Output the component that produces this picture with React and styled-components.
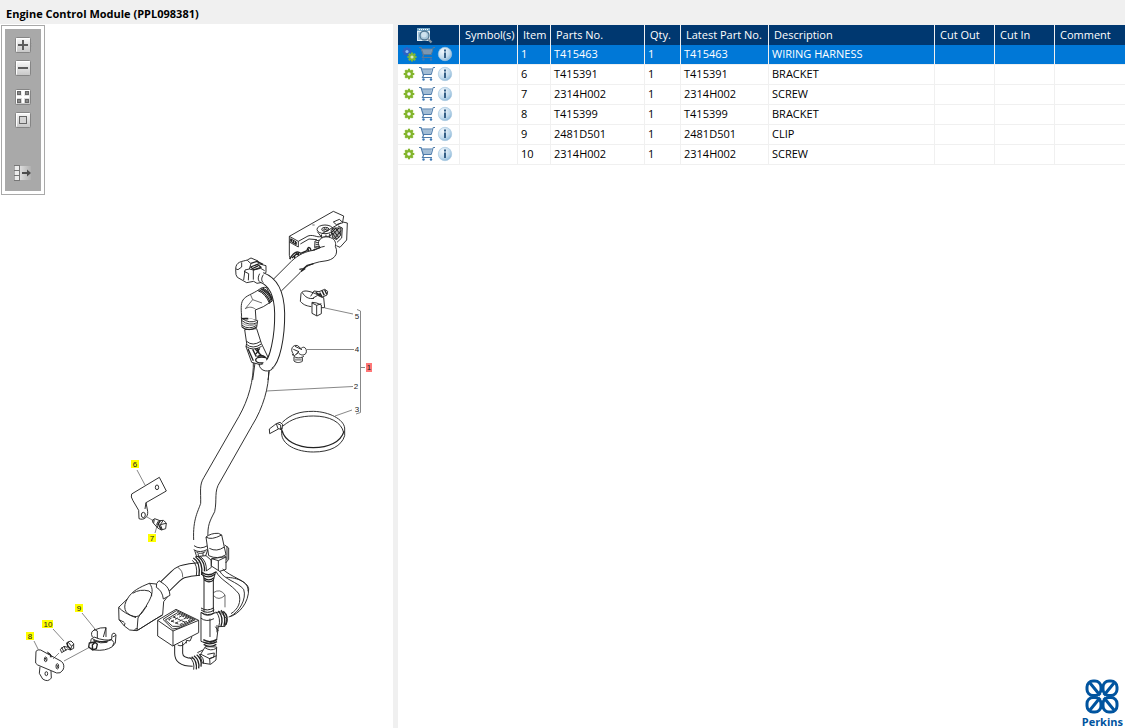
import React, { useState } from "react";
import styled, { createGlobalStyle } from "styled-components";

const GlobalStyle = createGlobalStyle`
  * { box-sizing: border-box; }
  body {
    margin: 0;
    background: #fff;
    color: #000;
    font: 11px/16px "Open Sans", "Noto Sans", sans-serif;
  }
`;

const Page = styled.div`
  min-height: 100vh;
  display: flex;
  flex-direction: column;
`;

const TitleBar = styled.header`
  height: 24px;
  padding: 6px 6px 2px;
  background: #f0f0f0;
`;

const Title = styled.h1`
  margin: 0;
  font-size: 11px;
  line-height: 16px;
  font-weight: 700;
`;

const Workspace = styled.main`
  flex: 1;
  display: grid;
  grid-template-columns: minmax(0, 393fr) 5px minmax(0, 727fr);
`;

const Illustration = styled.section`
  position: relative;
  min-width: 0;
`;

const Drawing = styled.svg`
  display: block;
  width: 100%;
  height: auto;
`;

const Callout = styled.text`
  font: 8px/8px "Liberation Sans", sans-serif;
  fill: #222;
  text-anchor: middle;
`;

const Splitter = styled.div`
  background: #f0f0f0;
`;

const Toolbar = styled.div`
  position: absolute;
  top: 1px;
  left: 1px;
  padding: 3px;
  border: 1px solid #a9a9a9;
  background: #fff;
`;

const ToolbarBody = styled.div`
  display: flex;
  flex-direction: column;
  align-items: center;
  gap: 11px;
  padding: 7px 9px 9px;
  background: #a9a9a9;
`;

const ToolGroup = styled.div`
  display: flex;
  flex-direction: column;
  gap: 5px;
  ${(p) => p.$last && "padding-top: 24px;"}
`;

const IconButton = styled.button`
  display: block;
  width: 18px;
  height: 18px;
  padding: 0;
  border: 0;
  background: none;
  cursor: pointer;
  svg { display: block; width: 18px; height: 18px; }
`;

const PartsPanel = styled.section`
  min-width: 0;
  padding-top: 1px;
  background: linear-gradient(#f0f0f0 1px, #fff 1px);
  display: flex;
  flex-direction: column;
  justify-content: space-between;
`;

const PartsTable = styled.table`
  width: 100%;
  table-layout: fixed;
  border-collapse: separate;
  border-spacing: 0;
`;

const Column = styled.col`
  width: ${(p) => (p.$width ? p.$width + "px" : "auto")};
`;

const HeadCell = styled.th`
  height: 20px;
  padding: 0 0 0 5px;
  border-right: 1px solid #f0f0f0;
  background: #003870;
  color: #fff;
  font-weight: 400;
  text-align: left;
  white-space: nowrap;
  &:last-child { border-right: 0; }
`;

const HeadIcon = styled.span`
  display: flex;
  justify-content: center;
  padding-right: 14px;
  svg { width: 18px; height: 18px; }
`;

const Row = styled.tr`
  background: ${(p) => (p.$selected ? "#0078d7" : "#fff")};
  color: ${(p) => (p.$selected ? "#fff" : "#000")};
  cursor: default;
`;

const Cell = styled.td`
  height: 20px;
  padding: 0 0 0 3px;
  border-right: 1px solid #f0f0f0;
  border-bottom: 1px solid #f0f0f0;
  line-height: 18px;
  vertical-align: top;
  white-space: nowrap;
  overflow: hidden;
  &:last-child { border-right: 0; }
`;

const RowActions = styled.div`
  display: flex;
  margin-left: -1px;
`;

const Brand = styled.footer`
  align-self: flex-end;
  display: flex;
  flex-direction: column;
  align-items: center;
  padding-right: 2px;
  color: #00549f;
  font: 700 11px/13px "Open Sans", sans-serif;
  svg { width: 34px; height: 36px; }
`;

/* ---------- toolbar icons ---------- */

function ToolFace({ children, tab }) {
  return (
    <svg viewBox="0 0 18 18" aria-hidden="true">
      <defs>
        <linearGradient id="face" x1="0" y1="0" x2="0" y2="1">
          <stop offset="0" stopColor="#fafafa" />
          <stop offset="1" stopColor="#c6c6c6" />
        </linearGradient>
      </defs>
      {tab === "right" && <path d="M16 6 18 9 16 11.500z" fill="#eee" stroke="#7c7c7c" strokeWidth=".6" />}
      {tab === "left" && <path d="M2 6 0 9 2 11.500z" fill="#eee" stroke="#7c7c7c" strokeWidth=".6" />}
      <rect x="1.500" y="1.500" width="15" height="15" rx="1" fill="url(#face)" stroke="#858585" />
      <path d="M2.500 15.500V2.500H15.500" fill="none" stroke="#fff" />
      {children}
    </svg>
  );
}

const ZoomInIcon = () => (
  <ToolFace tab="right"><path d="M4 9H14M9 4V14" stroke="#5c5c5c" strokeWidth="2" /></ToolFace>
);
const ZoomOutIcon = () => (
  <ToolFace tab="left"><path d="M4 9H14" stroke="#5c5c5c" strokeWidth="2" /></ToolFace>
);
const TilesIcon = () => (
  <ToolFace>
    <g fill="#8a8a8a" stroke="#666">
      <rect x="3.500" y="3.500" width="3" height="3" /><rect x="11.500" y="3.500" width="3" height="3" />
      <rect x="3.500" y="11.500" width="3" height="3" /><rect x="11.500" y="11.500" width="3" height="3" />
    </g>
    <path d="M9 3V15M3 9H15" stroke="#fff" strokeWidth="2" />
  </ToolFace>
);
const FitIcon = () => (
  <ToolFace><rect x="5.500" y="5.500" width="7" height="7" fill="#d5d5d5" stroke="#666" /></ToolFace>
);
const DetachIcon = () => (
  <svg viewBox="0 0 18 18" aria-hidden="true">
    <defs>
      <linearGradient id="fade"><stop stopColor="#ddd" /><stop offset="1" stopColor="#b0b0b0" /></linearGradient>
    </defs>
    <path d="M6 2H17V16H6z" fill="url(#fade)" />
    <path d="M1 2H5V6H1zM1 7H5V11H1zM1 12H5V16H1z" fill="#ececec" />
    <path d="M0 1.500H5M0 6.500H5M0 11.500H5M0 16.500H5" stroke="#777" />
    <path d="M5.500 1V17" stroke="#777" />
    <path d="M8 9H14" stroke="#4c4c4c" strokeWidth="2" />
    <path d="M13 5.500 17 9 13 12.500z" fill="#4c4c4c" />
  </svg>
);

/* ---------- table icons ---------- */

const PreviewIcon = () => (
  <svg viewBox="0 0 18 18" aria-hidden="true">
    <rect x="2" y="2" width="13" height="13" fill="#e6f1f8" />
    <path d="M2 2H15V5H2z" fill="#78a9c9" />
    <path d="M4 3.500H13" stroke="#fff" strokeDasharray="1 1" />
    <path d="M3 7H6M3 9H5M3 11H5M3 13H6" stroke="#5c94bb" />
    <circle cx="9.500" cy="9.500" r="4.500" fill="#a9c7da" stroke="#507691" strokeWidth="1.300" />
    <circle cx="9" cy="8.800" r="2.700" fill="#cfe2ee" />
    <path d="M12.500 12.500 16.500 16.500" stroke="#8799a8" strokeWidth="2.300" />
  </svg>
);

const gearTeeth = [0, 45, 90, 135];

const GearShape = ({ x, y, r, color, hole = "#fff" }) => (
  <g transform={`translate(${x} ${y})`}>
    {gearTeeth.map((a) => (
      <path key={a} d={`M0 ${-r}V${r}`} stroke={color} strokeWidth={r * 0.42} transform={`rotate(${a})`} />
    ))}
    <circle r={r * 0.76} fill={color} />
    <circle r={r * 0.34} fill={hole} />
  </g>
);
const GearIcon = () => (
  <svg viewBox="0 0 18 18" aria-hidden="true"><GearShape x={9} y={9} r={5.300} color="#83b52c" /></svg>
);
const GearsIcon = () => (
  <svg viewBox="0 0 18 18" aria-hidden="true">
    <GearShape x={7} y={6.500} r={4.600} color="#2f62c4" hole="#8fc0f5" />
    <GearShape x={12} y={12} r={4.600} color="#7eb637" hole="#d6ecc0" />
  </svg>
);
const CartIcon = ({ muted }) => (
  <svg viewBox="0 0 18 18" aria-hidden="true">
    <path d="M3 4H15L13.500 9.500H5z" fill={muted ? "#91afc9" : "#e4eef6"} />
    <g fill="none" stroke={muted ? "#5d7894" : "#4f7dac"}>
      <path d="M1 2.500H3L5.500 10.500 4.500 12.500H14" strokeWidth="1.200" />
      <path d="M3.500 4H14.500M17 2.500H15.200L13.300 9.500H5" />
      <path d="M4 6H14M4.500 8H13.500M6 4V9.500M8 4V9.500M10 4V9.500M12 4V9.500" strokeWidth=".5" />
    </g>
    <circle cx="5.500" cy="14.500" r="1.200" fill="#3c78b5" /><circle cx="13" cy="14.500" r="1.200" fill="#3c78b5" />
  </svg>
);
const InfoIcon = () => (
  <svg viewBox="0 0 18 18" aria-hidden="true">
    <defs>
      <radialGradient id="glass" cx=".35" cy=".3" r=".8">
        <stop stopColor="#f0f7fc" /><stop offset=".6" stopColor="#c3dcee" /><stop offset="1" stopColor="#80afd2" />
      </radialGradient>
    </defs>
    <circle cx="9" cy="9" r="6.700" fill="url(#glass)" stroke="#a6c7df" strokeWidth=".7" />
    <path d="M8 7.500H10V13H8zM8 4.500H10V6.500H8z" fill="#345f86" />
  </svg>
);

const KnotLogo = () => (
  <svg viewBox="0 0 34 36" aria-hidden="true">
    <g fill="none" stroke="#00549f" strokeWidth="3">
      <rect x="2" y="2" width="14" height="14.500" rx="6" />
      <rect x="18" y="2" width="14" height="14.500" rx="6" />
      <rect x="2" y="18.500" width="14" height="14.500" rx="6" />
      <rect x="18" y="18.500" width="14" height="14.500" rx="6" />
      <path d="M5 4 14 15M29 4 20 15M5 31 14 20M29 31 20 20M13 14 21 21M21 14 13 21" />
    </g>
    <path d="M17 14.500 20 17.500 17 20.500 14 17.500z" fill="#fff" />
  </svg>
);

/* ---------- exploded view ---------- */

const callouts = [
  { n: 6, x: 135, y: 464 }, { n: 7, x: 152, y: 538 }, { n: 8, x: 30, y: 636 },
  { n: 9, x: 79, y: 608 }, { n: 10, x: 48, y: 624 },
];
const plainCallouts = [
  { n: 5, x: 357, y: 316 }, { n: 4, x: 357, y: 349 }, { n: 2, x: 356, y: 386 }, { n: 3, x: 357, y: 409 },
];

const section = (x, y) => `translate(${x} ${y}) scale(.33333)`;

/* A hose: a dark line with a white core drawn along the same centre line. */
const Hose = ({ d, width }) => (
  <>
    <path d={d} strokeWidth={width} />
    <path d={d} stroke="#fff" strokeWidth={width - 6} strokeLinecap="square" />
  </>
);

function Leaders() {
  return (
    <g stroke="#888" strokeWidth="1" fill="none">
      <path d="M325 308 353 314M307 349.500H354M266 391 353 386.500M335 416 352 410M357 309.500 360.500 311V412.500L356 414M360.500 367.500H365" />
      <path d="M137 470 145 485M155 533 157 526M34 641 38 649M82 613 95 629M53 629 64 641" />
      <path d="M147 517 154 521M53 659 59 653M64 661 90 647" />
    </g>
  );
}

function UpperHarness() {
  return (
    <g transform={section(220, 200)}>
      {/* control unit connector */}
      <path d="M208 109 340 34 371 48 368 66 382 69 380 120 360 142 349 137" />
      <path d="M208 109V166L211 178M208 109 235 124V141L208 126M212 116 229 126V134L212 124z" />
      <path d="M214 117V125M220 120V130M226 124V133" strokeWidth="4" />
      <path d="M235 124 264 108C282 101 298 119 306 105M241 132 267 117 291 119M306 101 362 69" />
      <path d="M340 66 358 58 369 68 349 74zM354 78 367 84 365 114 351 127" />
      <ellipse cx="315" cy="88" rx="24" ry="13" />
      <ellipse cx="316" cy="88" rx="11" ry="6" />
      <path d="M308 88H324M312 84 320 92M320 84 312 92M277 75H284" strokeWidth="2" />
      <path d="M292 95 305 112 331 108 339 93M304 103V122M318 104V118M329 101V113" />
      <path d="M333 91 342 84H363L362 106 350 119 338 113z" fill="#aaa" />
      <path d="M337 87 357 114M346 84 362 104M335 97 350 117M357 84 337 105M363 92 344 115M348 84 335 97" strokeWidth="3" />
      <path d="M285 123 301 120 297 145 284 143zM287 128H299M287 134H298M286 140H297" />
      <path d="M209 177C221 157 231 151 242 160L261 152C263 137 273 141 273 155L286 147M216 174 230 161 244 170M224 167V181M235 156V172M250 156 255 167M263 145 269 158" strokeWidth="4" />
      {/* main loom */}
      <path d="M159 239 214 184C236 163 258 154 281 151L301 143C285 125 305 107 325 111 345 115 349 128 346 139 358 164 340 180 315 183 292 185 270 193 253 204L240 218 184 273" fill="#fff" />
      <path d="M281 151C290 146 302 141 314 139" />
      <path d="M238 208 250 206 262 196 281 191M243 214 256 205" strokeWidth="4" />
      {/* rear sensor plug */}
      <path d="M47 208C47 184 66 185 82 180L93 174 114 183 115 191 138 197V218L128 222 122 230V248L111 250 101 244 80 248 52 232 48 224z" />
      <path d="M65 187V201L54 209 48 207M82 181 93 191 88 207 75 210 71 240M88 207 100 210V239M72 214 86 221 85 241M101 210 122 205 134 212" />
      <path d="M92 201 112 193 123 202 102 209zM93 190 111 184 129 193M100 204 114 198" strokeWidth="4" />
      {/* lower boot */}
      <path d="M74 389 80 430 78 440 95 487 121 494 150 484 124 430 110 386z" fill="#fff" />
      <path d="M80 424Q98 440 122 424M78 432Q98 450 124 432M78 439Q99 455 125 439" />
      <path d="M84 446 100 482M98 448 109 470M106 447 125 468M119 445 108 462M112 444 118 462" strokeWidth="4" />
      <ellipse cx="125" cy="480" rx="18" ry="9" strokeWidth="4" />
      <path d="M112 470Q126 462 136 472" strokeWidth="4" />
      <path d="M105 489 98 540M148 512 144 540" />
      {/* elbow */}
      <path d="M118 268C97 283 78 286 69 300 61 311 64 334 65 352L108 360 106 330 130 320 157 303 140 263C132 260 122 264 118 268z" fill="#fff" />
      <path d="M92 285 98 299 126 309M98 299 76 326C88 319 98 321 107 328" strokeWidth="2" />
      <path d="M114 272Q137 281 149 311M121 267Q145 277 154 305M128 264Q150 274 157 297" strokeWidth="3" />
      <path d="M118 270Q141 280 151 308" strokeWidth="4" />
      <path d="M124 266Q147 275 156 301" strokeWidth="4" />
      {/* clamp */}
      <path d="M64 349 66 382Q86 396 110 382L113 361" fill="#fff" />
      <path d="M65 354Q87 373 112 361M66 362Q87 379 112 368M66 376Q87 391 110 376M67 382Q87 396 110 381" />
      <path d="M66 369Q87 384 111 371" stroke="#888" />
      <path d="M66 356H85" strokeWidth="5" />
      {/* looped tube in front of the elbow */}
      <Hose d="M124 232C164 246 178 285 179 340 180 415 163 483 147 493" width={33} />
      <path d="M117 492C119 516 150 519 161 503" />
      <path d="M119 221C114 230 113 238 118 245M130 224C124 234 123 242 130 248" />
      {/* strap with fixing */}
      <path d="M243 281C249 267 270 274 286 281L311 293 314 323 304 323M243 281 241 304C252 317 264 318 274 320M247 278C255 291 266 298 282 295M276 307 276 340 291 348 304 341V315L290 309zM276 309 290 316 304 311M290 316V347" />
      <path d="M272 289 282 273 297 275 314 268 323 274 321 285 306 292 293 286 278 295" />
      <path d="M287 277 301 286M299 278 306 290M306 272 313 286M314 269 320 283" strokeWidth="4" />
      {/* small clip */}
      <path d="M220 461C209 450 218 432 233 437L243 446C252 435 263 447 258 460 250 469 239 464 235 458L223 467 219 462M220 448 237 455 229 462M225 439 246 449M217 461C219 474 240 478 252 468M222 471V483C231 490 240 488 247 484V472" />
      <path d="M225 479H245" strokeWidth="6" stroke="#999" />
    </g>
  );
}

function LoomAndTie() {
  return (
    <g transform={section(180, 360)}>
      <path d="M220 0C222 62 205 119 177 169L72 352C57 375 63 395 62 430 55 453 38 477 41 540" />
      <path d="M266 34C267 79 250 143 216 197L120 366C101 394 112 417 104 455 89 484 82 496 84 535" />
      <path d="M307 187C333 162 360 154 400 154 448 155 491 178 494 204V227C485 258 451 276 400 276 350 276 305 254 305 220V203M309 198C334 177 361 168 400 168 449 168 484 186 491 218" />
      <path d="M306 211C313 241 350 263 400 263 446 263 482 246 492 214" strokeWidth="4" />
      <path d="M289 191 268 207 269 221 295 207M289 191 300 187 308 193 306 208 294 206zM292 191 302 195V210" />
    </g>
  );
}

function LowerHarness() {
  return (
    <g transform={section(110, 525)}>
      {/* upper junction */}
      <path d="M252 62Q270 75 293 62M251 74Q270 86 293 73M254 76 260 95 286 95 293 75M259 81Q271 90 286 80M264 86 266 96M279 84V94" />
      <path d="M256 95 288 92 303 105 304 127 286 140 262 150" fill="#fff" />
      <path d="M305 101 304 123 329 139 348 133V95z" fill="#fff" />
      <path d="M344 60 356 69V103L347 114M351 64V105M325 107V136M305 101 325 107 348 96" />
      <path d="M288 36Q303 24 325 25L335 30 348 89Q323 105 296 92z" fill="#fff" />
      <path d="M288 36Q303 47 335 30M298 70Q320 82 343 66" />
      {/* cables */}
      <path d="M318 139C329 164 364 177 387 207 394 231 385 252 363 266M329 138C341 163 383 171 401 193 411 222 387 262 361 274M338 132C359 155 414 168 416 191 417 233 387 269 356 276M349 157C381 158 417 170 414 199" />
      <path d="M310 203Q331 189 345 210V247M311 212Q326 229 345 211" strokeWidth="2" />
      {/* side branch */}
      <Hose d="M158 191 196 154C212 139 222 138 240 135L268 132" width={41} />
      <path d="M203 127Q219 136 218 157" strokeWidth="2" />
      <path d="M250 99Q272 112 267 152M257 96Q280 112 275 150M264 94Q288 112 283 145" strokeWidth="4" />
      <path d="M247 106Q264 120 259 153M270 94Q291 108 289 138" />
      <path d="M52 222C66 197 91 186 118 175L138 177 171 217 161 230 158 269 81 317 59 315 43 303 27 284 26 247z" fill="#fff" />
      <path d="M139 187Q157 197 160 222L180 211Q178 188 163 178L147 167Q137 174 139 187z" fill="#fff" />
      <path d="M118 175C131 190 128 208 116 230 106 251 91 264 84 279L81 317M52 222C38 244 42 267 71 274 93 280 101 252 111 243M68 205Q90 191 117 198 128 204 125 214M26 247Q42 265 78 278M27 284 43 292M43 303 45 294" />
      <path d="M71 318Q78 306 86 314L130 286 158 270" />
      {/* vertical stem */}
      <Hose d="M296 162V262" width={31} />
      <path d="M276 139 283 164Q297 175 310 166L317 140" fill="#fff" />
      <path d="M276 142Q295 157 317 141M277 149Q295 163 315 148M281 158Q296 171 312 158" strokeWidth="4" />
      <path d="M282 165Q297 177 311 165" />
      {/* lower junction */}
      <path d="M273 262Q291 279 314 264L331 260 351 282 345 304 325 305 320 345Q296 361 273 349z" fill="#fff" />
      <path d="M272 279Q289 293 312 281M300 281V336M321 300V322M316 305 325 318" />
      <path d="M273 249Q292 261 312 248M273 255Q292 269 313 255M273 262Q292 275 314 263" strokeWidth="3" />
      <path d="M325 258Q342 277 333 304M333 256Q350 274 342 303M340 259Q358 274 348 299" strokeWidth="4" />
      <path d="M318 260Q334 280 326 306" />
      {/* square connector and its elbow */}
      <Hose d="M206 352V385Q206 412 248 412" width={27} />
      <path d="M143 286 198 253 266 286V323L188 363 143 333z" fill="#fff" />
      <path d="M143 286 189 318 266 286M189 318V363" />
      <path d="M159 283 199 257 256 284 207 309 188 312zM166 285 203 263 250 284 208 304 188 304z" />
      <path d="M176 284 205 268 241 284 209 299zM190 276 226 292M183 290 214 273M196 295 229 278" strokeDasharray="10 4" />
      <path d="M203 360Q217 368 229 350M229 346 240 348 246 335M229 346V355" />
      <path d="M280 344Q299 356 321 343M280 351Q299 363 321 350M281 358Q300 370 319 358" strokeWidth="4" />
      <path d="M286 365 320 366 318 405 302 418 277 414 270 391z" fill="#fff" />
      <path d="M273 388 299 401 300 417M299 401 320 392M292 388 313 384 311 397 297 401M285 368Q302 380 319 370" />
      <path d="M245 395Q262 408 259 433M252 392Q270 406 266 430M260 389Q277 402 273 425" strokeWidth="4" />
      <path d="M239 397Q255 411 251 434M266 386Q284 400 280 416M262 383 279 375" />
    </g>
  );
}

function Brackets() {
  return (
    <>
      <g transform={section(110, 440)}>
        <path d="M65 162 148 112 169 153 108 188 113 214C115 231 102 242 87 236L86 211 69 182Q61 170 65 162zM108 188 105 207" />
        <ellipse cx="141" cy="142" rx="5" ry="7" /><ellipse cx="100" cy="225" rx="6" ry="8" />
        <path d="M127 241 134 236 150 242 160 241 169 249 167 266 154 270 143 264 129 248zM146 242Q136 252 143 263M159 242 151 254 157 269M151 254 168 250M133 238 131 249" />
        <path d="M144 247Q147 260 155 269M151 242 143 255" strokeWidth="4" />
      </g>
      <g transform={section(15, 590)}>
        {/* bracket 8 */}
        <path d="M63 184Q68 177 77 180L139 214Q151 224 144 240 136 252 125 249L68 225Q59 221 62 210zM75 230 73 250 83 267Q99 278 109 264L108 243M97 186Q108 190 110 202" />
        <ellipse cx="92" cy="208" rx="4" ry="7" /><ellipse cx="127" cy="229" rx="4" ry="8" /><ellipse cx="94" cy="251" rx="4" ry="6" />
        <path d="M97 189 107 195 106 202M91 204 94 212M126 225 128 233" />
        {/* bolt 10 */}
        <path d="M136 178 147 169 157 172 158 156 168 153 176 161 176 175 166 180 158 177 140 188zM140 172 146 184M147 170 153 182M159 156 170 169 166 180M170 169 176 162" />
        <path d="M155 158Q158 172 168 178" strokeWidth="4" />
        {/* clamp 9 */}
        <path d="M232 141Q224 124 241 119 255 112 273 113V141M237 118 247 123V145M273 113 265 141M297 129 303 134 301 159 292 170Q271 184 239 180L229 174M297 129 291 133 290 148Q271 155 237 141L228 148 227 159M302 136 293 141M290 149 297 158 293 168M235 151Q261 161 291 149" />
        <path d="M232 146Q252 159 279 153M237 153Q257 162 277 157" />
        <path d="M223 159 239 156 247 163 244 176 233 180 221 171zM239 158 232 165 233 178" strokeWidth="4" />
      </g>
    </>
  );
}

function ExplodedView() {
  return (
    <Drawing viewBox="0 24 393 704" role="img" aria-label="Engine control module exploded view">
      <Leaders />
      <g fill="none" stroke="#222" strokeWidth="2.800" strokeLinejoin="round">
        <LoomAndTie />
        <UpperHarness />
        <LowerHarness />
        <Brackets />
      </g>
      {plainCallouts.map((c) => <Callout key={c.n} x={c.x} y={c.y + 3}>{c.n}</Callout>)}
      <rect x="366" y="363" width="6" height="9" fill="#f77" />
      <Callout x="369" y="370">1</Callout>
      {callouts.map((c) => (
        <g key={c.n}>
          <rect x={c.x - (c.n > 9 ? 6 : 4)} y={c.y - 4} width={c.n > 9 ? 11 : 8} height="8" fill="#ff0" />
          <Callout x={c.x} y={c.y + 3}>{c.n}</Callout>
        </g>
      ))}
    </Drawing>
  );
}

/* ---------- data ---------- */

const columns = [
  { label: "Symbol(s)", width: 58 },
  { label: "Item", width: 33 },
  { label: "Parts No.", width: 94 },
  { label: "Qty.", width: 36 },
  { label: "Latest Part No.", width: 88 },
  { label: "Description", width: 166 },
  { label: "Cut Out", width: 60 },
  { label: "Cut In", width: 60 },
  { label: "Comment" },
];

const parts = [
  { item: "1", no: "T415463", text: "WIRING HARNESS", assembly: true },
  { item: "6", no: "T415391", text: "BRACKET" },
  { item: "7", no: "2314H002", text: "SCREW" },
  { item: "8", no: "T415399", text: "BRACKET" },
  { item: "9", no: "2481D501", text: "CLIP" },
  { item: "10", no: "2314H002", text: "SCREW" },
];

export default function App() {
  const [selected, setSelected] = useState("1");
  return (
    <Page>
      <GlobalStyle />
      <TitleBar><Title>Engine Control Module (PPL098381)</Title></TitleBar>
      <Workspace>
        <Illustration>
          <ExplodedView />
          <Toolbar role="toolbar" aria-label="Illustration tools">
            <ToolbarBody>
              <ToolGroup>
                <IconButton aria-label="Zoom in"><ZoomInIcon /></IconButton>
                <IconButton aria-label="Zoom out"><ZoomOutIcon /></IconButton>
              </ToolGroup>
              <ToolGroup>
                <IconButton aria-label="Show tiles"><TilesIcon /></IconButton>
                <IconButton aria-label="Fit to window"><FitIcon /></IconButton>
              </ToolGroup>
              <ToolGroup $last>
                <IconButton aria-label="Detach panel"><DetachIcon /></IconButton>
              </ToolGroup>
            </ToolbarBody>
          </Toolbar>
        </Illustration>
        <Splitter />
        <PartsPanel>
          <PartsTable>
            <colgroup>
              <Column $width={62} />
              {columns.map((c) => <Column key={c.label} $width={c.width} />)}
            </colgroup>
            <thead>
              <tr>
                <HeadCell aria-label="Actions"><HeadIcon><PreviewIcon /></HeadIcon></HeadCell>
                {columns.map((c) => <HeadCell key={c.label}>{c.label}</HeadCell>)}
              </tr>
            </thead>
            <tbody>
              {parts.map((p) => (
                <Row key={p.item} $selected={p.item === selected} onClick={() => setSelected(p.item)}>
                  <Cell>
                    <RowActions>
                      <IconButton aria-label="Part details">{p.assembly ? <GearsIcon /> : <GearIcon />}</IconButton>
                      <IconButton aria-label="Add to cart"><CartIcon muted={p.item === selected} /></IconButton>
                      <IconButton aria-label="Information"><InfoIcon /></IconButton>
                    </RowActions>
                  </Cell>
                  <Cell />
                  <Cell>{p.item}</Cell>
                  <Cell>{p.no}</Cell>
                  <Cell>1</Cell>
                  <Cell>{p.no}</Cell>
                  <Cell>{p.text}</Cell>
                  <Cell />
                  <Cell />
                  <Cell />
                </Row>
              ))}
            </tbody>
          </PartsTable>
          <Brand><KnotLogo />Perkins</Brand>
        </PartsPanel>
      </Workspace>
    </Page>
  );
}
